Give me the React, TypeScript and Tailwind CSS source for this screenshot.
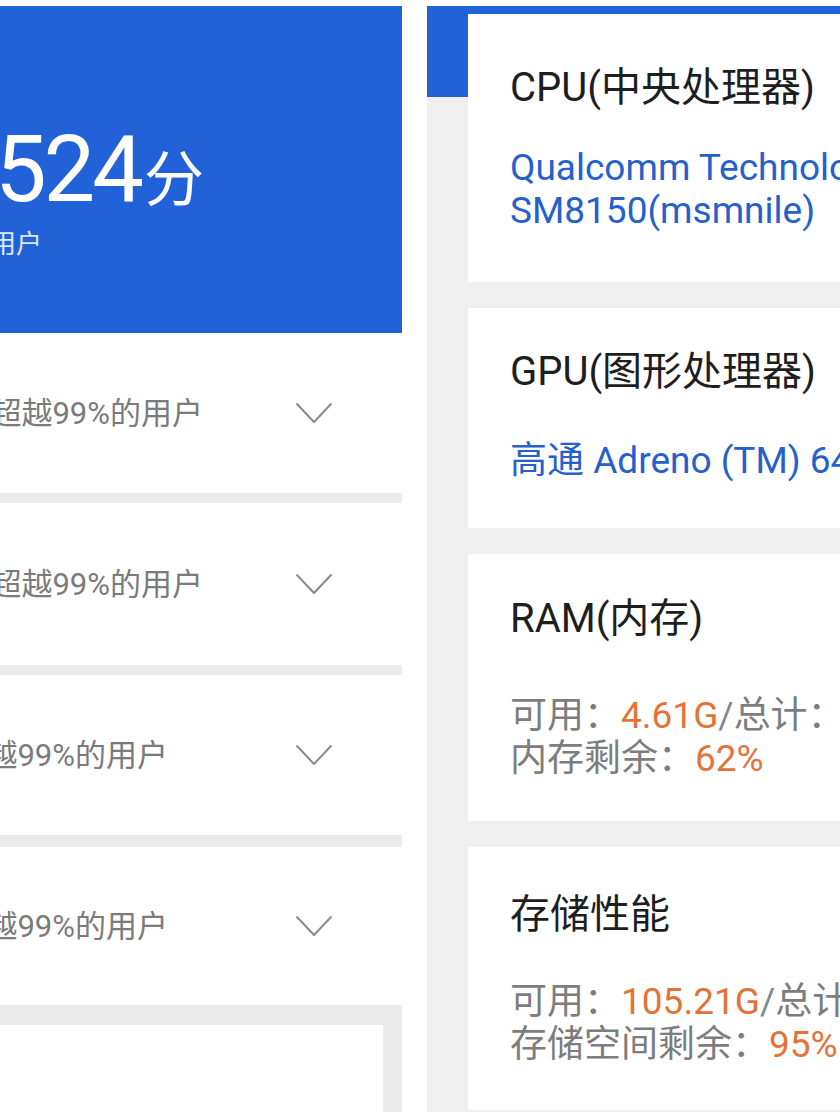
import React from 'react';

type Row = { label: string; edge: string };
type Sep = string;

const rows: { row: Row; h: string; sep: Sep }[] = [
  { row: { label: 'CPU：超越99%的用户', edge: 'w-[203px]' }, h: 'h-[160px]', sep: 'h-[10px]' },
  { row: { label: 'GPU：超越99%的用户', edge: 'w-[203px]' }, h: 'h-[162px]', sep: 'h-[10px]' },
  { row: { label: '内存性能：超越99%的用户', edge: 'w-[168px]' }, h: 'h-[160px]', sep: 'h-[12px]' },
  { row: { label: '存储性能：超越99%的用户', edge: 'w-[168px]' }, h: 'h-[158px]', sep: 'h-[20px]' },
];

function Chevron() {
  return (
    <svg width="38" height="22" viewBox="0 0 38 22" fill="none" className="shrink-0">
      <polyline points="1.5,1.5 19,20 36.5,1.5" stroke="#8a8a8a" strokeWidth="2" strokeLinejoin="round" />
    </svg>
  );
}

function ScorePanel() {
  return (
    <div className="w-[402px] shrink-0 flex flex-col overflow-hidden">
      {/* blue score header */}
      <div className="h-[327px] bg-[#2262d9] overflow-hidden flex flex-col">
        <div className="mt-[118px] w-[204px] flex justify-end items-baseline whitespace-nowrap text-white">
          <span className="text-[92px] leading-[92px] tracking-[-3px]">1524</span>
          <span className="text-[60px] leading-[60px] ml-[3px]">分</span>
        </div>
        <div className="mt-[15px] w-[42px] flex justify-end whitespace-nowrap text-[26px] leading-[26px] text-white/85">
          超越99%的用户
        </div>
      </div>

      {rows.map(({ row, h, sep }, i) => (
        <div key={i} className="flex flex-col">
          <div className={`${h} bg-white flex items-center pr-[69px]`}>
            <div className={`${row.edge} shrink-0 flex justify-end whitespace-nowrap text-[31px] leading-[31px] text-[#7b7b7b]`}>
              {row.label}
            </div>
            <div className="ml-auto">
              <Chevron />
            </div>
          </div>
          <div className={`${sep} bg-[#ebebeb]`} />
        </div>
      ))}

      <div className="h-[87px] bg-[#ebebeb] flex">
        <div className="w-[383px] bg-white" />
      </div>
    </div>
  );
}

type Card = {
  title: string;
  box: string;
  pad: string;
  gap: string;
  lines: React.ReactNode[];
};

const gray = 'text-[#7d7d7d]';
const orange = 'text-[#e2743a]';
const slash = 'text-[#7f8796]';

const cards: Card[] = [
  {
    title: 'CPU(中央处理器)',
    box: 'h-[268px]',
    pad: 'pt-[50px]',
    gap: 'mt-[34px]',
    lines: [
      <span className="text-[#2560cc]">Qualcomm Technologies, Inc</span>,
      <span className="text-[#2560cc]">SM8150(msmnile)</span>,
    ],
  },
  {
    title: 'GPU(图形处理器)',
    box: 'h-[220px]',
    pad: 'pt-[40px]',
    gap: 'mt-[43px]',
    lines: [<span className="text-[#2560cc]">高通 Adreno (TM) 640</span>],
  },
  {
    title: 'RAM(内存)',
    box: 'h-[267px]',
    pad: 'pt-[41px]',
    gap: 'mt-[51px]',
    lines: [
      <span className={gray}>
        可用：<span className={orange}>4.61G</span><span className={slash}>/</span>总计：<span className={orange}>7.44G</span>
      </span>,
      <span className={gray}>
        内存剩余：<span className={orange}>62%</span>
      </span>,
    ],
  },
  {
    title: '存储性能',
    box: 'h-[263px]',
    pad: 'pt-[44px]',
    gap: 'mt-[41px]',
    lines: [
      <span className={gray}>
        可用：<span className={orange}>105.21G</span><span className={slash}>/</span>总计：<span className={orange}>110.29G</span>
      </span>,
      <span className={gray}>
        存储空间剩余：<span className={orange}>95%</span>
      </span>,
    ],
  },
];

function DevicePanel() {
  return (
    <div className="ml-[25px] flex-1 min-w-0 h-[1106px] bg-[#efefef] flex flex-col overflow-hidden">
      <div className="h-[91px] shrink-0 bg-[#2262d9]" />
      <div className="-mt-[83px] pl-[41px] flex flex-col gap-[26px]">
        {cards.map((c, i) => (
          <div key={i} className={`${c.box} ${c.pad} shrink-0 bg-white pl-[42px] overflow-hidden whitespace-nowrap`}>
            <div className="h-[48px] text-[40px] leading-[48px] text-[#1e1e1e]">{c.title}</div>
            <div className={c.gap}>
              {c.lines.map((l, j) => (
                <div key={j} className="h-[43px] text-[37px] leading-[43px]">
                  {l}
                </div>
              ))}
            </div>
          </div>
        ))}
      </div>
    </div>
  );
}

export default function App() {
  return (
    <div className="w-[840px] h-[1120px] overflow-hidden bg-white flex items-start pt-[6px] font-['Roboto','Noto_Sans_CJK_SC',sans-serif]">
      <ScorePanel />
      <DevicePanel />
    </div>
  );
}
